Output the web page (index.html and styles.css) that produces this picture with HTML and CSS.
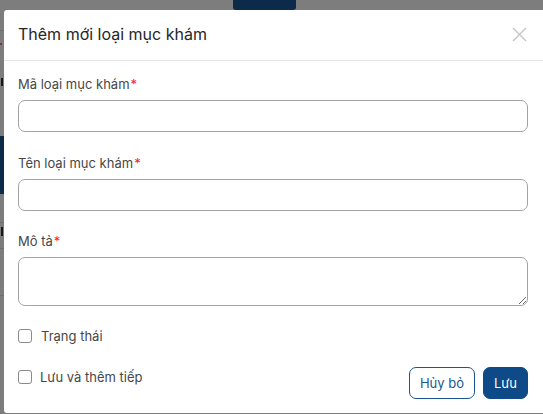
FILE: index.html
```html
<!DOCTYPE html>
<html lang="vi">
<head>
<meta charset="utf-8">
<title>Thêm mới loại mục khám</title>
<link rel="stylesheet" href="styles.css">
</head>
<body>
<div class="page">
  <div class="page-top">
    <span class="back-btn"></span>
  </div>
  <div class="page-side">
    <div class="side-row side-sep"></div>
    <div class="side-row side-red"></div>
    <div class="side-row side-char"></div>
    <div class="side-nav"></div>
    <div class="side-row side-sep2"></div>
    <div class="side-row side-char2"></div>
    <div class="side-row side-sep3"></div>
    <div class="side-row side-sep4"></div>
  </div>
</div>
<div class="overlay"></div>
<div class="modal">
  <div class="modal-header">
    <h1 class="modal-title">Thêm mới loại mục khám</h1>
    <button class="modal-close" aria-label="Đóng">
      <svg width="15" height="15" viewBox="0 0 15 15"><path d="M1 1L14 14M14 1L1 14" stroke="#c6c6c6" stroke-width="1.4" fill="none"/></svg>
    </button>
  </div>
  <div class="modal-body">
    <div class="field field-first">
      <label class="field-label">Mã loại mục khám<span class="req">*</span></label>
      <input class="field-input" type="text">
    </div>
    <div class="field">
      <label class="field-label">Tên loại mục khám<span class="req">*</span></label>
      <input class="field-input" type="text">
    </div>
    <div class="field">
      <label class="field-label">Mô tả<span class="req">*</span></label>
      <textarea class="field-textarea"></textarea>
    </div>
    <label class="check check-status"><span class="box"></span><span class="check-text">Trạng thái</span></label>
    <div class="footer">
      <label class="check check-next"><span class="box"></span><span class="check-text">Lưu và thêm tiếp</span></label>
      <div class="actions">
        <button class="btn btn-outline">Hủy bỏ</button>
        <button class="btn btn-primary">Lưu</button>
      </div>
    </div>
  </div>
</div>
</body>
</html>
```
FILE: styles.css
```css
* { box-sizing: border-box; }
html, body { margin: 0; padding: 0; }
body {
  width: 543px;
  height: 414px;
  overflow: hidden;
  font-family: Inter, "Noto Sans", "Liberation Sans", sans-serif;
  background: #fbfbfb;
  position: relative;
}
.page { width: 543px; height: 414px; }
.page-top { height: 10px; position: relative; }
.back-btn {
  position: absolute;
  left: 233px;
  top: -14px;
  width: 63px;
  height: 24px;
  background: #185494;
  border-radius: 3px;
}
.page-side { width: 6px; }
.side-row { height: 1px; }
.side-sep { margin-top: 20px; background: #dcdcdc; }
.side-red { margin-top: 12px; height: 2px; background: repeating-linear-gradient(90deg, #ff7070 0 2px, transparent 2px 4px); }
.side-char { margin-top: 33px; height: 8px; width: 2px; margin-left: 1px; background: #333; }
.side-nav {
  margin-top: 50px;
  height: 58px;
  background: #185494;
}
.side-sep2 { margin-top: 28px; background: #dcdcdc; }
.side-char2 { margin-top: 4px; height: 9px; width: 2px; margin-left: 1px; background: #333; }
.side-sep3 { margin-top: 12px; background: #dcdcdc; }
.side-sep4 { margin-top: 46px; background: #dcdcdc; }

.overlay {
  position: absolute;
  inset: 0;
  background: rgba(0, 0, 0, 0.5);
}
.modal {
  position: absolute;
  left: 4px;
  top: 10px;
  width: 541px;
  height: 403px;
  background: #ffffff;
  border-radius: 3px;
  overflow: hidden;
}
.modal-header {
  height: 51px;
  border-bottom: 1px solid #e6e6e6;
  display: flex;
  align-items: center;
  justify-content: space-between;
  padding: 0 18px 2px 14px;
}
.modal-title {
  margin: 0;
  font-size: 16px;
  font-weight: 400;
  color: #262626;
}
.modal-close {
  border: 0;
  background: none;
  padding: 0;
  width: 15px;
  height: 15px;
  display: flex;
  margin-top: 1px;
}
.modal-body {
  padding: 14px 17px 0 14px;
}
.field {
  display: flex;
  flex-direction: column;
  margin-bottom: 21px;
}
.field-first { margin-bottom: 22px; }
.field-label {
  font-size: 13px;
  line-height: 18px;
  color: #474747;
  margin-bottom: 7px;
}
.req { color: #f5222d; margin-left: 1px; }
.field-input {
  height: 32px;
  width: 510px;
  border: 1px solid #a3a3a3;
  border-radius: 7px;
  background: #fff;
  font-family: inherit;
  font-size: 13px;
  padding: 0 10px;
}
.field-textarea {
  height: 49px;
  width: 510px;
  border: 1px solid #a3a3a3;
  border-radius: 7px;
  background: #fff;
  font-family: inherit;
  font-size: 13px;
  padding: 6px 10px;
  display: block;
}
.check {
  display: flex;
  align-items: center;
  font-size: 13px;
  line-height: 18px;
  color: #474747;
}
.box {
  width: 14px;
  height: 14px;
  border: 1px solid #8a8a8a;
  border-radius: 3px;
  background: #fff;
  flex: none;
}
.check-status .check-text { margin-left: 9px; }
.check-next .check-text { margin-left: 8px; }
.footer {
  display: flex;
  justify-content: space-between;
  align-items: flex-start;
  margin-top: 22px;
}
.check-next { margin-top: 1px; }
.actions { display: flex; gap: 8px; }
.btn {
  height: 32px;
  border-radius: 7px;
  font-family: inherit;
  font-size: 13px;
  padding: 0;
  cursor: pointer;
}
.btn-outline {
  width: 66px;
  background: #fff;
  border: 1px solid #1b5690;
  color: #1b5690;
}
.btn-primary {
  width: 45px;
  background: #0d4a87;
  border: 1px solid #0d4a87;
  color: #ffffff;
}
```
